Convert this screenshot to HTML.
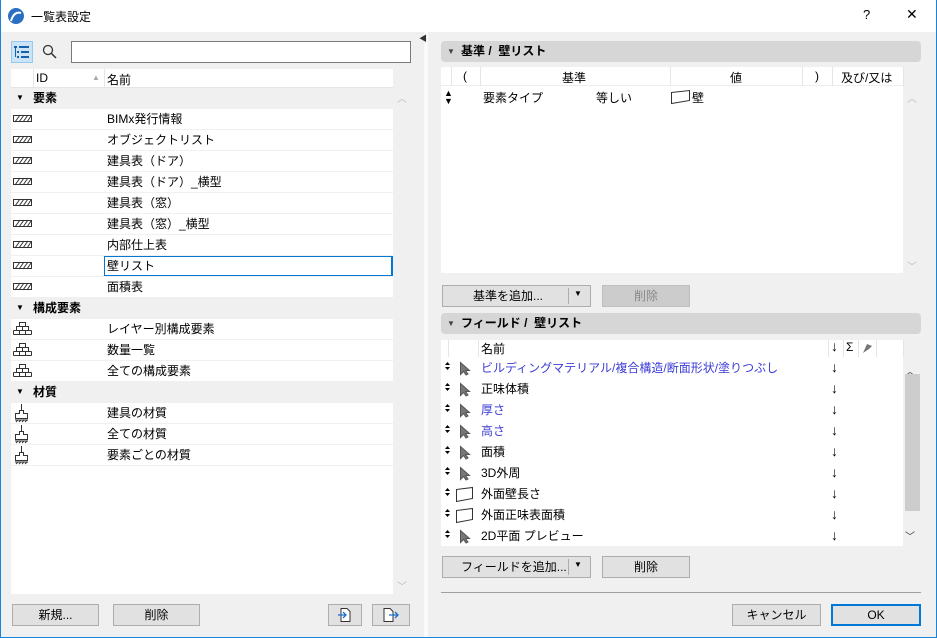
<!DOCTYPE html>
<html><head><meta charset="utf-8"><style>
*{box-sizing:border-box;margin:0;padding:0}
body{width:937px;height:638px;background:#f0f0f0;font-family:"Liberation Sans","Noto Sans CJK JP",sans-serif;font-size:12px;color:#000;position:relative;overflow:hidden}
.a{position:absolute}
.win{left:0;top:0;width:937px;height:638px;border:1px solid #1883d7;border-top:none}
.title{left:0;top:0;width:937px;height:32px;background:#fff}
.row{position:absolute;left:11px;width:382px;height:21px;background:#fff;border-bottom:1px solid #f0f0f0}
.grp{background:#f0f0f0;font-weight:bold}
.txt{position:absolute;top:1px;white-space:nowrap}
.btn{position:absolute;height:22px;background:#e1e1e1;border:1px solid #adadad;text-align:center;line-height:20px}
.hdr{position:absolute;left:441px;width:480px;height:21px;background:#d6d6d6;border-radius:4px;font-weight:bold;line-height:20px;padding-left:20px}
.blue{color:#3b3bd6}
.arr{font-size:14px}
</style></head><body>
<div class="a title"></div>
<div class="a win"></div>
<svg class="a" style="left:7px;top:7px" width="18" height="18" viewBox="0 0 18 18"><circle cx="9" cy="9" r="8" fill="#2a6fc4"/><path d="M4 14 Q7 4 14 6" stroke="#fff" stroke-width="2" fill="none"/></svg>
<div class="a" style="left:31px;top:8px;font-size:12px">一覧表設定</div>
<div class="a" style="left:863px;top:7px;font-size:13px">?</div>
<div class="a" style="left:906px;top:6px;font-size:14px">✕</div>

<div class="a" style="left:11px;top:41px;width:22px;height:22px;background:#cce4f7;border:1px solid #99c8ef"></div>
<svg class="a" style="left:14px;top:45px" width="16" height="14"><g fill="#1b5fa8"><rect x="0" y="1" width="3" height="2"/><rect x="5" y="1" width="10" height="2"/><rect x="3" y="6" width="2" height="2"/><rect x="7" y="6" width="8" height="2"/><rect x="3" y="11" width="2" height="2"/><rect x="7" y="11" width="8" height="2"/><rect x="1" y="3" width="1" height="9"/></g></svg>
<svg class="a" style="left:42px;top:44px" width="16" height="16"><circle cx="6" cy="6" r="4.5" stroke="#333" stroke-width="1.3" fill="none"/><path d="M9.5 9.5 L14 14" stroke="#333" stroke-width="1.5"/></svg>
<div class="a" style="left:71px;top:41px;width:340px;height:22px;background:#fff;border:1px solid #7a7a7a"></div>

<div class="a" style="left:11px;top:69px;width:382px;height:525px;background:#fff"></div>
<div class="a" style="left:11px;top:69px;width:382px;height:19px;border-bottom:1px solid #e5e5e5"></div>
<div class="a" style="left:33px;top:69px;width:1px;height:19px;background:#e5e5e5"></div>
<div class="a" style="left:104px;top:69px;width:1px;height:19px;background:#e5e5e5"></div>
<div class="a" style="left:36px;top:71px">ID</div>
<div class="a" style="left:92px;top:73px;font-size:8px;color:#aaa">▲</div>
<div class="a" style="left:107px;top:71px">名前</div>
<div class="a" style="left:397px;top:90px;color:#bbb;font-size:10px">︿</div>
<div class="a" style="left:397px;top:578px;color:#bbb;font-size:10px">﹀</div>

<div class="row grp" style="top:88px"><span class="txt" style="left:5px;font-size:8px;top:5px">▼</span><span class="txt" style="left:22px">要素</span></div>
<div class="row" style="top:109px"><span class="txt" style="left:96px">BIMx発行情報</span></div>
<div class="row" style="top:130px"><span class="txt" style="left:96px">オブジェクトリスト</span></div>
<div class="row" style="top:151px"><span class="txt" style="left:96px">建具表（ドア）</span></div>
<div class="row" style="top:172px"><span class="txt" style="left:96px">建具表（ドア）_横型</span></div>
<div class="row" style="top:193px"><span class="txt" style="left:96px">建具表（窓）</span></div>
<div class="row" style="top:214px"><span class="txt" style="left:96px">建具表（窓）_横型</span></div>
<div class="row" style="top:235px"><span class="txt" style="left:96px">内部仕上表</span></div>
<div class="row" style="top:256px"><span class="txt" style="left:96px">壁リスト</span></div>
<div class="a" style="left:104px;top:256px;width:289px;height:20px;border:1px solid #0078d7;border-right:2px solid #0078d7"></div>
<div class="row" style="top:277px"><span class="txt" style="left:96px">面積表</span></div>
<div class="row grp" style="top:298px"><span class="txt" style="left:5px;font-size:8px;top:5px">▼</span><span class="txt" style="left:22px">構成要素</span></div>
<div class="row" style="top:319px"><span class="txt" style="left:96px">レイヤー別構成要素</span></div>
<div class="row" style="top:340px"><span class="txt" style="left:96px">数量一覧</span></div>
<div class="row" style="top:361px"><span class="txt" style="left:96px">全ての構成要素</span></div>
<div class="row grp" style="top:382px"><span class="txt" style="left:5px;font-size:8px;top:5px">▼</span><span class="txt" style="left:22px">材質</span></div>
<div class="row" style="top:403px"><span class="txt" style="left:96px">建具の材質</span></div>
<div class="row" style="top:424px"><span class="txt" style="left:96px">全ての材質</span></div>
<div class="row" style="top:445px"><span class="txt" style="left:96px">要素ごとの材質</span></div>

<svg class="a" style="left:13px;top:113px" width="20" height="180">
<defs><g id="h"><rect x="0.5" y="0.5" width="18" height="6" fill="#fff" stroke="#333"/><path d="M2 7 L7 0 M6 7 L11 0 M10 7 L15 0 M14 7 L18 1" stroke="#333"/></g></defs>
<use href="#h" y="2"/><use href="#h" y="23"/><use href="#h" y="44"/><use href="#h" y="65"/><use href="#h" y="86"/><use href="#h" y="107"/><use href="#h" y="128"/><use href="#h" y="149"/><use href="#h" y="170"/>
</svg>
<svg class="a" style="left:13px;top:320px" width="20" height="60">
<defs><g id="b" fill="none" stroke="#333"><rect x="6.5" y="0.5" width="6" height="4"/><rect x="3.5" y="4.5" width="6" height="4"/><rect x="9.5" y="4.5" width="6" height="4"/><path d="M0.5 12.5 H18.5 M0.5 8.5 V12.5 M6.5 8.5 V12.5 M12.5 8.5V12.5 M18.5 8.5V12.5 M0.5 8.5 H18.5"/></g></defs>
<use href="#b" y="2"/><use href="#b" y="23"/><use href="#b" y="44"/></svg>
<svg class="a" style="left:14px;top:403px" width="20" height="64">
<defs><g id="p" fill="none" stroke="#333"><path d="M7.5 1 V7 M5.5 7.5 H9.5 V10.5 H13.5 V15.5 H1.5 V10.5 H5.5 Z"/><path d="M1 17 H14 M2 19 L4 17 M5 19 L7 17 M8 19 L10 17 M11 19 L13 17"/></g></defs>
<use href="#p" y="0"/><use href="#p" y="21"/><use href="#p" y="42"/></svg>

<div class="btn" style="left:12px;top:604px;width:87px">新規...</div>
<div class="btn" style="left:113px;top:604px;width:87px">削除</div>
<div class="btn" style="left:328px;top:604px;width:34px"><svg width="16" height="16" style="margin-top:2px"><path d="M4 1.5 H10 L13 4.5 V14.5 H4 Z" fill="#fff" stroke="#333"/><path d="M1 8 H9 M6 5 L9 8 L6 11" stroke="#1b6fd0" stroke-width="1.3" fill="none"/></svg></div>
<div class="btn" style="left:372px;top:604px;width:38px"><svg width="18" height="16" style="margin-top:2px"><path d="M2 1.5 H8 L11 4.5 V14.5 H2 Z" fill="#fff" stroke="#333"/><path d="M7 8 H16 M13 5 L16 8 L13 11" stroke="#1b6fd0" stroke-width="1.3" fill="none"/></svg></div>

<div class="a" style="left:424px;top:32px;width:4px;height:605px;background:#fafafa"></div>
<div class="a" style="left:419px;top:33px;font-size:8px;color:#333">◀</div>

<div class="hdr" style="top:41px">基準 /&nbsp; 壁リスト</div>
<div class="a" style="left:447px;top:47px;font-size:8px;color:#444">▼</div>
<div class="a" style="left:441px;top:67px;width:462px;height:206px;background:#fff"></div>
<div class="a" style="left:441px;top:67px;width:462px;height:19px;border-bottom:1px solid #eee"></div>
<div class="a" style="left:451px;top:67px;width:1px;height:19px;background:#e5e5e5"></div>
<div class="a" style="left:480px;top:67px;width:1px;height:19px;background:#e5e5e5"></div>
<div class="a" style="left:670px;top:67px;width:1px;height:19px;background:#e5e5e5"></div>
<div class="a" style="left:802px;top:67px;width:1px;height:19px;background:#e5e5e5"></div>
<div class="a" style="left:832px;top:67px;width:1px;height:19px;background:#e5e5e5"></div>
<div class="a" style="left:903px;top:67px;width:1px;height:19px;background:#e5e5e5"></div>
<div class="a" style="left:463px;top:69px">(</div>
<div class="a" style="left:562px;top:69px">基準</div>
<div class="a" style="left:730px;top:69px">値</div>
<div class="a" style="left:815px;top:69px">)</div>
<div class="a" style="left:841px;top:69px">及び/又は</div>
<div class="a" style="left:444px;top:89px;font-size:9px;line-height:8px">▲<br>▼</div>
<div class="a" style="left:483px;top:89px">要素タイプ</div>
<div class="a" style="left:596px;top:89px">等しい</div>
<svg class="a" style="left:670px;top:89px" width="22" height="16"><path d="M1.5 3.5 L19.5 1.5 V11.5 L1.5 14.5 Z" fill="#fff" stroke="#333"/></svg>
<div class="a" style="left:692px;top:89px">壁</div>
<div class="a" style="left:907px;top:90px;color:#bbb;font-size:10px">︿</div>
<div class="a" style="left:907px;top:258px;color:#bbb;font-size:10px">﹀</div>

<div class="btn" style="left:442px;top:285px;width:149px;text-align:left;padding-left:30px">基準を追加...</div>
<div class="a" style="left:568px;top:288px;width:1px;height:16px;background:#adadad"></div>
<div class="a" style="left:574px;top:289px;font-size:8px">▼</div>
<div class="btn" style="left:602px;top:285px;width:88px;background:#ccc;border-color:#bfbfbf;color:#888">削除</div>

<div class="hdr" style="top:313px">フィールド /&nbsp; 壁リスト</div>
<div class="a" style="left:447px;top:319px;font-size:8px;color:#444">▼</div>
<div class="a" style="left:441px;top:340px;width:462px;height:206px;background:#fff"></div>
<div class="a" style="left:448px;top:340px;width:1px;height:17px;background:#e5e5e5"></div>
<div class="a" style="left:478px;top:340px;width:1px;height:17px;background:#e5e5e5"></div>
<div class="a" style="left:828px;top:340px;width:1px;height:17px;background:#e5e5e5"></div>
<div class="a" style="left:843px;top:340px;width:1px;height:17px;background:#e5e5e5"></div>
<div class="a" style="left:858px;top:340px;width:1px;height:17px;background:#e5e5e5"></div>
<div class="a" style="left:876px;top:340px;width:1px;height:17px;background:#e5e5e5"></div>
<div class="a" style="left:903px;top:340px;width:1px;height:17px;background:#e5e5e5"></div>
<div class="a" style="left:481px;top:340px">名前</div>
<div class="a arr" style="left:831px;top:338px">↓</div>
<div class="a" style="left:846px;top:340px">Σ</div>
<svg class="a" style="left:862px;top:342px" width="12" height="12"><path d="M1 11 L5 2 L10 4 L7 7 Z" fill="#777"/></svg>

<div class="a" style="left:905px;top:363px;color:#333;font-size:10px">︿</div>
<div class="a" style="left:905px;top:374px;width:15px;height:137px;background:#cdcdcd"></div>
<div class="a" style="left:905px;top:528px;color:#333;font-size:10px">﹀</div>

<svg class="a" style="left:441px;top:358px" width="40" height="190">
<defs><g id="s"><path d="M4 5 L6.5 2 L9 5 Z M4 7 L6.5 10 L9 7 Z" fill="#000"/></g>
<g id="c"><path d="M19.5 3.5 V15.5 L22.5 12.5 L25 16 L27 15 L24.5 11.5 H28.5 Z" fill="#777" stroke="#555"/></g>
<g id="w"><path d="M15.5 5.5 L31.5 3.5 V14.5 L15.5 17.5 Z" fill="#fff" stroke="#333"/></g></defs>
<use href="#s" y="2"/><use href="#c" y="1"/>
<use href="#s" y="23"/><use href="#c" y="22"/>
<use href="#s" y="44"/><use href="#c" y="43"/>
<use href="#s" y="65"/><use href="#c" y="64"/>
<use href="#s" y="86"/><use href="#c" y="85"/>
<use href="#s" y="107"/><use href="#c" y="106"/>
<use href="#s" y="128"/><use href="#w" y="126"/>
<use href="#s" y="149"/><use href="#w" y="147"/>
<use href="#s" y="170"/><use href="#c" y="169"/>
</svg>
<div class="a blue" style="left:481px;top:359px">ビルディングマテリアル/複合構造/断面形状/塗りつぶし</div>
<div class="a" style="left:481px;top:380px">正味体積</div>
<div class="a blue" style="left:481px;top:401px">厚さ</div>
<div class="a blue" style="left:481px;top:422px">高さ</div>
<div class="a" style="left:481px;top:443px">面積</div>
<div class="a" style="left:481px;top:464px">3D外周</div>
<div class="a" style="left:481px;top:485px">外面壁長さ</div>
<div class="a" style="left:481px;top:506px">外面正味表面積</div>
<div class="a" style="left:481px;top:527px">2D平面 プレビュー</div>
<div class="a arr" style="left:831px;top:357px;line-height:21px">↓<br>↓<br>↓<br>↓<br>↓<br>↓<br>↓<br>↓<br>↓</div>

<div class="btn" style="left:442px;top:556px;width:149px;text-align:left;padding-left:18px">フィールドを追加...</div>
<div class="a" style="left:568px;top:559px;width:1px;height:16px;background:#adadad"></div>
<div class="a" style="left:574px;top:560px;font-size:8px">▼</div>
<div class="btn" style="left:602px;top:556px;width:88px">削除</div>

<div class="a" style="left:441px;top:592px;width:480px;height:1px;background:#a0a0a0"></div>
<div class="btn" style="left:732px;top:604px;width:89px">キャンセル</div>
<div class="btn" style="left:831px;top:604px;width:90px;border:2px solid #0078d7;line-height:18px">OK</div>
</body></html>
